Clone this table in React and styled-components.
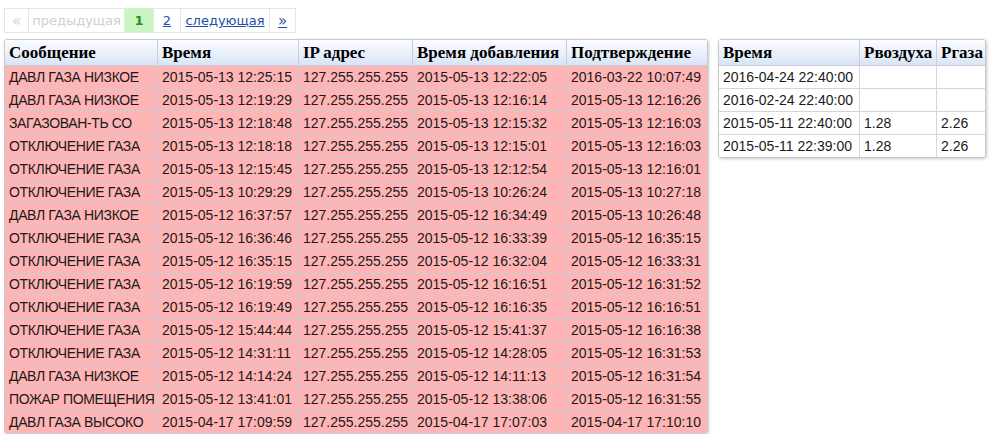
import styled, { createGlobalStyle } from "styled-components";

const GlobalStyle = createGlobalStyle`
  body {
    margin: 0;
    background: #fff;
    font-family: "Liberation Sans", Arial, sans-serif;
  }
`;

const Page = styled.div`
  padding: 8px 0 0 4px;
`;

const Pager = styled.div`
  display: inline-flex;
  border: 1px solid #e6e6e6;
  font-family: "DejaVu Sans", Verdana, sans-serif;
  font-size: 13px;
  margin-bottom: 6px;
`;

const PageItem = styled.span`
  display: flex;
  align-items: center;
  justify-content: center;
  height: 23px;
  width: ${(p) => p.$w}px;
  border-left: ${(p) => (p.$first ? "none" : "1px solid #e6e6e6")};
  color: ${(p) => (p.$disabled ? "#cfcfcf" : p.$active ? "#2f8a1f" : "#1d4fa8")};
  background: ${(p) => (p.$active ? "#c8f5c0" : "#fff")};
  font-weight: ${(p) => (p.$active ? "bold" : "normal")};
  font-size: ${(p) => (p.$arrow ? "15px" : "inherit")};
  text-decoration: ${(p) => (p.$link ? "underline" : "none")};
  box-sizing: border-box;
`;

const Tables = styled.div`
  display: flex;
  align-items: flex-start;
  gap: 10px;
`;

const Table = styled.table`
  border-collapse: separate;
  border-spacing: 0;
  table-layout: fixed;
  width: ${(p) => p.$w}px;
  border: 1px solid #c9c9c9;
  border-radius: 3px;
  box-shadow: 1px 1px 3px rgba(0, 0, 0, 0.22);
  overflow: hidden;
  font-size: 14px;
  color: #1a1a1a;
`;

const Th = styled.th`
  height: 25px;
  padding: 0 3px 0 4px;
  text-align: left;
  font-family: "Liberation Serif", "Times New Roman", serif;
  font-size: 17px;
  font-weight: bold;
  color: #000;
  white-space: nowrap;
  overflow: hidden;
  background: linear-gradient(to bottom, #fbfdff 0%, #e9f0fb 55%, #d8e4f5 100%);
  border-right: 1px solid #c6d0dc;
  border-bottom: 1px solid #c6d0dc;
  &:last-child {
    border-right: none;
  }
`;

const Td = styled.td`
  height: 22px;
  padding: 0 1px 0 4px;
  white-space: nowrap;
  overflow: hidden;
  letter-spacing: ${(p) => (p.$caps ? "-0.35px" : "normal")};
  background: ${(p) => (p.$alert ? "#ffb5b5" : "#fff")};
  border-right: 1px solid ${(p) => (p.$alert ? "#c7cdd6" : "#d6d6d6")};
  border-bottom: 1px solid ${(p) => (p.$alert ? "#c7cdd6" : "#d6d6d6")};
  &:last-child {
    border-right: none;
  }
  tr:last-child & {
    border-bottom: none;
  }
`;

const events = [
  ["ДАВЛ ГАЗА НИЗКОЕ", "2015-05-13 12:25:15", "2015-05-13 12:22:05", "2016-03-22 10:07:49"],
  ["ДАВЛ ГАЗА НИЗКОЕ", "2015-05-13 12:19:29", "2015-05-13 12:16:14", "2015-05-13 12:16:26"],
  ["ЗАГАЗОВАН-ТЬ СО", "2015-05-13 12:18:48", "2015-05-13 12:15:32", "2015-05-13 12:16:03"],
  ["ОТКЛЮЧЕНИЕ ГАЗА", "2015-05-13 12:18:18", "2015-05-13 12:15:01", "2015-05-13 12:16:03"],
  ["ОТКЛЮЧЕНИЕ ГАЗА", "2015-05-13 12:15:45", "2015-05-13 12:12:54", "2015-05-13 12:16:01"],
  ["ОТКЛЮЧЕНИЕ ГАЗА", "2015-05-13 10:29:29", "2015-05-13 10:26:24", "2015-05-13 10:27:18"],
  ["ДАВЛ ГАЗА НИЗКОЕ", "2015-05-12 16:37:57", "2015-05-12 16:34:49", "2015-05-13 10:26:48"],
  ["ОТКЛЮЧЕНИЕ ГАЗА", "2015-05-12 16:36:46", "2015-05-12 16:33:39", "2015-05-12 16:35:15"],
  ["ОТКЛЮЧЕНИЕ ГАЗА", "2015-05-12 16:35:15", "2015-05-12 16:32:04", "2015-05-12 16:33:31"],
  ["ОТКЛЮЧЕНИЕ ГАЗА", "2015-05-12 16:19:59", "2015-05-12 16:16:51", "2015-05-12 16:31:52"],
  ["ОТКЛЮЧЕНИЕ ГАЗА", "2015-05-12 16:19:49", "2015-05-12 16:16:35", "2015-05-12 16:16:51"],
  ["ОТКЛЮЧЕНИЕ ГАЗА", "2015-05-12 15:44:44", "2015-05-12 15:41:37", "2015-05-12 16:16:38"],
  ["ОТКЛЮЧЕНИЕ ГАЗА", "2015-05-12 14:31:11", "2015-05-12 14:28:05", "2015-05-12 16:31:53"],
  ["ДАВЛ ГАЗА НИЗКОЕ", "2015-05-12 14:14:24", "2015-05-12 14:11:13", "2015-05-12 16:31:54"],
  ["ПОЖАР ПОМЕЩЕНИЯ", "2015-05-12 13:41:01", "2015-05-12 13:38:06", "2015-05-12 16:31:55"],
  ["ДАВЛ ГАЗА ВЫСОКО", "2015-04-17 17:09:59", "2015-04-17 17:07:03", "2015-04-17 17:10:10"],
];

const readings = [
  ["2016-04-24 22:40:00", "", ""],
  ["2016-02-24 22:40:00", "", ""],
  ["2015-05-11 22:40:00", "1.28", "2.26"],
  ["2015-05-11 22:39:00", "1.28", "2.26"],
];

function Pagination() {
  return (
    <Pager>
      <PageItem $w={23} $first $disabled $arrow>«</PageItem>
      <PageItem $w={96} $disabled>предыдущая</PageItem>
      <PageItem $w={29} $active>1</PageItem>
      <PageItem $w={27} $link>2</PageItem>
      <PageItem $w={89} $link>следующая</PageItem>
      <PageItem $w={26} $link $arrow>»</PageItem>
    </Pager>
  );
}

export default function App() {
  return (
    <Page>
      <GlobalStyle />
      <Pagination />
      <Tables>
        <Table $w={702}>
          <colgroup>
            <col style={{ width: 153 }} />
            <col style={{ width: 141 }} />
            <col style={{ width: 114 }} />
            <col style={{ width: 154 }} />
            <col style={{ width: 140 }} />
          </colgroup>
          <thead>
            <tr>
              <Th>Сообщение</Th>
              <Th>Время</Th>
              <Th>IP адрес</Th>
              <Th>Время добавления</Th>
              <Th>Подтверждение</Th>
            </tr>
          </thead>
          <tbody>
            {events.map((e, i) => (
              <tr key={i}>
                <Td $alert $caps>{e[0]}</Td>
                <Td $alert>{e[1]}</Td>
                <Td $alert>127.255.255.255</Td>
                <Td $alert>{e[2]}</Td>
                <Td $alert>{e[3]}</Td>
              </tr>
            ))}
          </tbody>
        </Table>
        <Table $w={266}>
          <colgroup>
            <col style={{ width: 141 }} />
            <col style={{ width: 77 }} />
            <col style={{ width: 48 }} />
          </colgroup>
          <thead>
            <tr>
              <Th>Время</Th>
              <Th>Рвоздуха</Th>
              <Th>Ргаза</Th>
            </tr>
          </thead>
          <tbody>
            {readings.map((r, i) => (
              <tr key={i}>
                <Td>{r[0]}</Td>
                <Td>{r[1]}</Td>
                <Td>{r[2]}</Td>
              </tr>
            ))}
          </tbody>
        </Table>
      </Tables>
    </Page>
  );
}
